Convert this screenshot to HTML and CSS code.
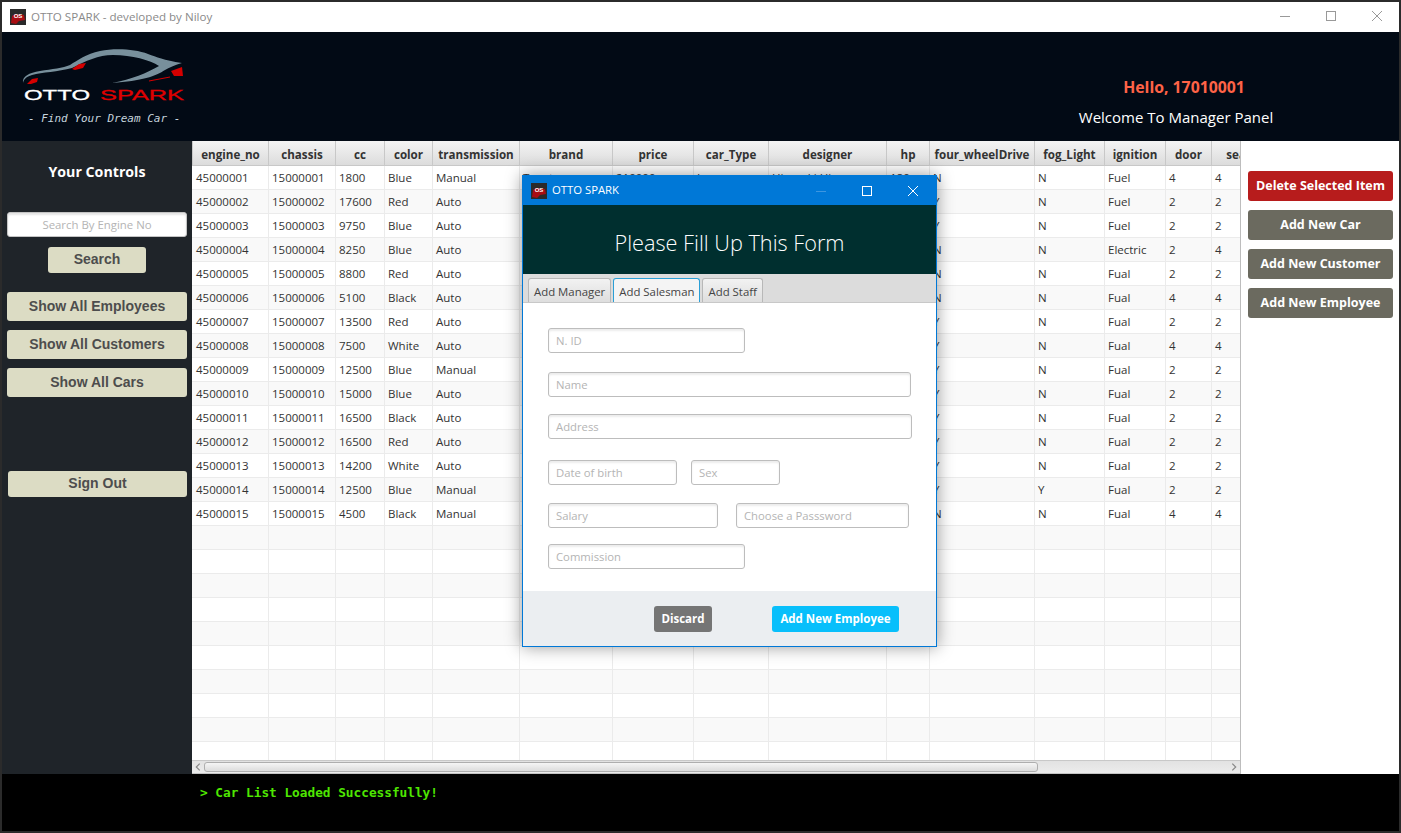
FILE: index.html
```html
<!DOCTYPE html>
<html lang="en">
<head>
    <meta charset="UTF-8">
    <title>OTTO SPARK - developed by Niloy</title>
    <link rel="stylesheet" href="styles.css">
</head>
<body>
<div class="window">
    <div class="titlebar">
        <svg class="app-icon" viewBox="0 0 16 16"><rect width="16" height="16" fill="#2a2a2a"/><path d="M1 14 L2 7 L5 5 L14 6 L15 11 L9 12 L6 15 Z" fill="#a80d12"/><text x="8" y="9" class="app-icon-text">OS</text></svg>
        <span class="titlebar-text">OTTO SPARK - developed by Niloy</span>
        <div class="win-controls">
            <svg viewBox="0 0 46 30"><path d="M19 14.5 H29" stroke="#999" fill="none"/></svg>
            <svg viewBox="0 0 46 30"><rect x="19.5" y="9.5" width="9" height="9" stroke="#999" fill="none"/></svg>
            <svg viewBox="0 0 46 30"><path d="M19 9 L29 19 M29 9 L19 19" stroke="#999" fill="none"/></svg>
        </div>
    </div>

    <header class="top">
        <div class="logo">
            <svg class="logo-car" viewBox="0 0 185 64">
                <path d="M13 43 C12 36 19 33 30 31 C42 29 53 28 60 25 C68 20 76 14 90 11 C105 8 125 9 138 14 C147 17 153 20 172 23 C165 25 160 27 155 30 C146 36 132 41 102 43 C122 39 137 33 149 26 C140 20 122 15 103 15 C88 15 76 21 62 28 C48 32 32 32 22 35 C16 37 14 39 13 43 Z" fill="#78909c"/>
                <path d="M62 29 L69 24 L76 23 L73 28 L65 30 Z" fill="#d40000"/>
                <path d="M17 44 L22 39 L28 38 L27 42 L21 44 Z" fill="#d40000"/>
                <path d="M161 31 L172 27 L173 36 L164 36 Z" fill="#d40000"/>
                <path d="M139 41 L160 37" stroke="#d40000" fill="none"/>
                <text x="14" y="60" class="logo-otto" textLength="66" lengthAdjust="spacingAndGlyphs">OTTO</text>
                <text x="90" y="60" class="logo-spark" textLength="84" lengthAdjust="spacingAndGlyphs">SPARK</text>
            </svg>
            <p class="tagline">- Find Your Dream Car -</p>
        </div>
        <div class="greeting">
            <p class="hello">Hello, 17010001</p>
            <p class="welcome">Welcome To Manager Panel</p>
        </div>
    </header>

    <div class="main">
        <aside class="sidebar">
            <h2 class="controls-title">Your Controls</h2>
            <input class="search-input" type="text" placeholder="Search By Engine No">
            <button class="side-btn search-btn">Search</button>
            <div class="side-group">
                <button class="side-btn">Show All Employees</button>
                <button class="side-btn">Show All Customers</button>
                <button class="side-btn">Show All Cars</button>
            </div>
            <button class="side-btn signout-btn">Sign Out</button>
        </aside>

        <section class="table-area">
            <div class="table-clip">
                <table class="cars">
                    <colgroup>
                        <col class="c77"><col class="c67"><col class="c49"><col class="c48"><col class="c87"><col class="c93"><col class="c81"><col class="c75"><col class="c118"><col class="c43"><col class="c105"><col class="c70"><col class="c61"><col class="c46"><col class="c60">
                    </colgroup>
                    <thead>
                        <tr><th>engine_no</th><th>chassis</th><th>cc</th><th>color</th><th>transmission</th><th>brand</th><th>price</th><th>car_Type</th><th>designer</th><th>hp</th><th>four_wheelDrive</th><th>fog_Light</th><th>ignition</th><th>door</th><th>seats</th></tr>
                    </thead>
                    <tbody>
                        <tr><td>45000001</td><td>15000001</td><td>1800</td><td>Blue</td><td>Manual</td><td>Toyota</td><td>210000</td><td>Luxury</td><td>Hiroyuki Hirano</td><td>180</td><td>N</td><td>N</td><td>Fuel</td><td>4</td><td>4</td></tr>
                        <tr><td>45000002</td><td>15000002</td><td>17600</td><td>Red</td><td>Auto</td><td></td><td></td><td></td><td></td><td></td><td>Y</td><td>N</td><td>Fuel</td><td>2</td><td>2</td></tr>
                        <tr><td>45000003</td><td>15000003</td><td>9750</td><td>Blue</td><td>Auto</td><td></td><td></td><td></td><td></td><td></td><td>Y</td><td>N</td><td>Fuel</td><td>2</td><td>2</td></tr>
                        <tr><td>45000004</td><td>15000004</td><td>8250</td><td>Blue</td><td>Auto</td><td></td><td></td><td></td><td></td><td></td><td>N</td><td>N</td><td>Electric</td><td>2</td><td>4</td></tr>
                        <tr><td>45000005</td><td>15000005</td><td>8800</td><td>Red</td><td>Auto</td><td></td><td></td><td></td><td></td><td></td><td>N</td><td>N</td><td>Fual</td><td>2</td><td>2</td></tr>
                        <tr><td>45000006</td><td>15000006</td><td>5100</td><td>Black</td><td>Auto</td><td></td><td></td><td></td><td></td><td></td><td>N</td><td>N</td><td>Fual</td><td>4</td><td>4</td></tr>
                        <tr><td>45000007</td><td>15000007</td><td>13500</td><td>Red</td><td>Auto</td><td></td><td></td><td></td><td></td><td></td><td>Y</td><td>N</td><td>Fual</td><td>2</td><td>2</td></tr>
                        <tr><td>45000008</td><td>15000008</td><td>7500</td><td>White</td><td>Auto</td><td></td><td></td><td></td><td></td><td></td><td>Y</td><td>N</td><td>Fual</td><td>4</td><td>4</td></tr>
                        <tr><td>45000009</td><td>15000009</td><td>12500</td><td>Blue</td><td>Manual</td><td></td><td></td><td></td><td></td><td></td><td>Y</td><td>N</td><td>Fual</td><td>2</td><td>2</td></tr>
                        <tr><td>45000010</td><td>15000010</td><td>15000</td><td>Blue</td><td>Auto</td><td></td><td></td><td></td><td></td><td></td><td>Y</td><td>N</td><td>Fual</td><td>2</td><td>2</td></tr>
                        <tr><td>45000011</td><td>15000011</td><td>16500</td><td>Black</td><td>Auto</td><td></td><td></td><td></td><td></td><td></td><td>Y</td><td>N</td><td>Fual</td><td>2</td><td>2</td></tr>
                        <tr><td>45000012</td><td>15000012</td><td>16500</td><td>Red</td><td>Auto</td><td></td><td></td><td></td><td></td><td></td><td>Y</td><td>N</td><td>Fual</td><td>2</td><td>2</td></tr>
                        <tr><td>45000013</td><td>15000013</td><td>14200</td><td>White</td><td>Auto</td><td></td><td></td><td></td><td></td><td></td><td>Y</td><td>N</td><td>Fual</td><td>2</td><td>2</td></tr>
                        <tr><td>45000014</td><td>15000014</td><td>12500</td><td>Blue</td><td>Manual</td><td></td><td></td><td></td><td></td><td></td><td>Y</td><td>Y</td><td>Fual</td><td>2</td><td>2</td></tr>
                        <tr><td>45000015</td><td>15000015</td><td>4500</td><td>Black</td><td>Manual</td><td></td><td></td><td></td><td></td><td></td><td>N</td><td>N</td><td>Fual</td><td>4</td><td>4</td></tr>
                        <tr><td></td><td></td><td></td><td></td><td></td><td></td><td></td><td></td><td></td><td></td><td></td><td></td><td></td><td></td><td></td></tr>
                        <tr><td></td><td></td><td></td><td></td><td></td><td></td><td></td><td></td><td></td><td></td><td></td><td></td><td></td><td></td><td></td></tr>
                        <tr><td></td><td></td><td></td><td></td><td></td><td></td><td></td><td></td><td></td><td></td><td></td><td></td><td></td><td></td><td></td></tr>
                        <tr><td></td><td></td><td></td><td></td><td></td><td></td><td></td><td></td><td></td><td></td><td></td><td></td><td></td><td></td><td></td></tr>
                        <tr><td></td><td></td><td></td><td></td><td></td><td></td><td></td><td></td><td></td><td></td><td></td><td></td><td></td><td></td><td></td></tr>
                        <tr><td></td><td></td><td></td><td></td><td></td><td></td><td></td><td></td><td></td><td></td><td></td><td></td><td></td><td></td><td></td></tr>
                        <tr><td></td><td></td><td></td><td></td><td></td><td></td><td></td><td></td><td></td><td></td><td></td><td></td><td></td><td></td><td></td></tr>
                        <tr><td></td><td></td><td></td><td></td><td></td><td></td><td></td><td></td><td></td><td></td><td></td><td></td><td></td><td></td><td></td></tr>
                        <tr><td></td><td></td><td></td><td></td><td></td><td></td><td></td><td></td><td></td><td></td><td></td><td></td><td></td><td></td><td></td></tr>
                        <tr><td></td><td></td><td></td><td></td><td></td><td></td><td></td><td></td><td></td><td></td><td></td><td></td><td></td><td></td><td></td></tr>
                    </tbody>
                </table>
            </div>
            <div class="hscroll">
                <svg class="hscroll-arrow" viewBox="0 0 12 14"><path d="M8 3 L4 7 L8 11" stroke="#888" stroke-width="1.4" fill="none"/></svg>
                <div class="hscroll-track"><div class="hscroll-thumb"></div></div>
                <svg class="hscroll-arrow" viewBox="0 0 12 14"><path d="M4 3 L8 7 L4 11" stroke="#888" stroke-width="1.4" fill="none"/></svg>
            </div>
        </section>

        <aside class="actions">
            <button class="action-btn action-delete">Delete Selected Item</button>
            <button class="action-btn">Add New Car</button>
            <button class="action-btn">Add New Customer</button>
            <button class="action-btn">Add New Employee</button>
        </aside>
    </div>

    <footer class="console">&gt; Car List Loaded Successfully!</footer>
</div>

<!-- Add employee dialog -->
<div class="dialog">
    <div class="dialog-title">
        <svg class="app-icon" viewBox="0 0 16 16"><rect width="16" height="16" fill="#2a2a2a"/><path d="M1 14 L2 7 L5 5 L14 6 L15 11 L9 12 L6 15 Z" fill="#a80d12"/><text x="8" y="9" class="app-icon-text">OS</text></svg>
        <span class="dialog-title-text">OTTO SPARK</span>
        <div class="dialog-controls">
            <svg viewBox="0 0 46 30"><path d="M18 15.5 H28" stroke="#3d96e0" fill="none"/></svg>
            <svg viewBox="0 0 46 30"><rect x="18.5" y="10.5" width="9" height="9" stroke="#fff" fill="none"/></svg>
            <svg viewBox="0 0 46 30"><path d="M18 10 L28 20 M28 10 L18 20" stroke="#fff" fill="none"/></svg>
        </div>
    </div>
    <div class="dialog-head">Please Fill Up This Form</div>
    <div class="tabs">
        <span class="tab">Add Manager</span>
        <span class="tab tab-active">Add Salesman</span>
        <span class="tab">Add Staff</span>
    </div>
    <div class="form">
        <div class="form-row row-nid"><input class="field w197" type="text" placeholder="N. ID"></div>
        <div class="form-row row-name"><input class="field w363" type="text" placeholder="Name"></div>
        <div class="form-row row-address"><input class="field w364" type="text" placeholder="Address"></div>
        <div class="form-row row-dob">
            <input class="field w129" type="text" placeholder="Date of birth">
            <input class="field w89" type="text" placeholder="Sex">
        </div>
        <div class="form-row row-salary">
            <input class="field w170" type="text" placeholder="Salary">
            <input class="field w173" type="text" placeholder="Choose a Passsword">
        </div>
        <div class="form-row row-comm"><input class="field w197" type="text" placeholder="Commission"></div>
    </div>
    <div class="dialog-foot">
        <button class="foot-btn foot-discard">Discard</button>
        <button class="foot-btn foot-add">Add New Employee</button>
    </div>
</div>
</body>
</html>
```

FILE: styles.css
```css
* {
    box-sizing: border-box;
}

body {
    margin: 0;
    width: 1401px;
    height: 833px;
    overflow: hidden;
    font-family: "Open Sans", "Noto Sans", sans-serif;
    background: #fff;
}

p, h2 {
    margin: 0;
}

button {
    border: none;
    cursor: pointer;
    white-space: nowrap;
}

.window {
    width: 1401px;
    height: 833px;
    border: 2px solid #2b2b2b;
    display: flex;
    flex-direction: column;
}

/* title bar */
.titlebar {
    height: 30px;
    flex: none;
    background: #fff;
    display: flex;
    align-items: center;
    padding-left: 8px;
}

.app-icon {
    width: 16px;
    height: 16px;
    flex: none;
}

.app-icon-text {
    font-family: "Liberation Sans", sans-serif;
    font-size: 6px;
    font-weight: bold;
    fill: #fff;
    text-anchor: middle;
}

.titlebar-text {
    margin-left: 5px;
    margin-bottom: 2px;
    font-size: 11.6px;
    color: #8a8a8a;
}

.win-controls {
    margin-left: auto;
    display: flex;
}

.win-controls svg {
    width: 46px;
    height: 30px;
}

/* header */
.top {
    height: 109px;
    flex: none;
    background: #020a15;
    display: flex;
    justify-content: space-between;
}

.logo {
    width: 185px;
    margin-left: 8px;
    padding-top: 8px;
}

.logo-car {
    display: block;
    width: 185px;
    height: 64px;
}

.logo-otto, .logo-spark {
    font-family: "Liberation Sans", sans-serif;
    font-size: 15.5px;
    stroke-width: 0.3;
}

.logo-otto {
    fill: #fff;
    stroke: #fff;
}

.logo-spark {
    fill: #e00000;
    stroke: #e00000;
}

.tagline {
    margin-top: 8px;
    margin-left: 18px;
    font-family: "DejaVu Sans Mono", monospace;
    font-style: italic;
    font-size: 11px;
    color: #c6d4de;
}

.greeting {
    width: 300px;
    padding-top: 44px;
    margin-right: 73px;
    text-align: center;
}

.hello {
    margin-left: 16px;
    font-size: 15.8px;
    font-weight: 700;
    line-height: 22px;
    color: #ff6347;
}

.welcome {
    margin-top: 8px;
    font-size: 15px;
    line-height: 22px;
    color: #fff;
}

/* main area */
.main {
    height: 633px;
    flex: none;
    display: flex;
}

.sidebar {
    width: 190px;
    flex: none;
    background: #1f2429;
    display: flex;
    flex-direction: column;
    align-items: center;
    padding-left: 5px;
    padding-right: 5px;
}

.controls-title {
    margin-top: 20px;
    height: 22px;
    line-height: 22px;
    font-size: 14.2px;
    font-weight: 700;
    color: #fff;
}

.search-input {
    width: 180px;
    height: 25px;
    margin-top: 29px;
    border: 1px solid #c4c4c4;
    border-radius: 3px;
    background: #fff;
    box-shadow: inset 0 2px 2px #e4e4e4;
    font-family: inherit;
    font-size: 11.4px;
    text-align: center;
    outline: none;
}

.search-input::placeholder {
    color: #b4b4b4;
    opacity: 1;
}

.side-btn {
    width: 180px;
    height: 29px;
    padding: 0 0 2px;
    border-radius: 3px;
    background: #dcdcc4;
    color: #4d4d4d;
    font-family: "Liberation Sans", sans-serif;
    font-size: 14px;
    font-weight: bold;
}

.search-btn {
    width: 98px;
    height: 26px;
    margin-top: 10px;
}

.side-group {
    margin-top: 19px;
    display: flex;
    flex-direction: column;
    gap: 9px;
}

.signout-btn {
    width: 179px;
    height: 26px;
    margin-top: 74px;
    margin-left: 1px;
}

/* car table */
.table-area {
    width: 1049px;
    flex: none;
    display: flex;
    flex-direction: column;
    border-right: 1px solid #bdbdbd;
}

.table-clip {
    height: 619px;
    overflow: hidden;
}

.cars {
    width: 1080px;
    table-layout: fixed;
    border-collapse: separate;
    border-spacing: 0;
    font-size: 11.5px;
    color: #333;
}

.c77 { width: 77px; }
.c67 { width: 67px; }
.c49 { width: 49px; }
.c48 { width: 48px; }
.c87 { width: 87px; }
.c93 { width: 93px; }
.c81 { width: 81px; }
.c75 { width: 75px; }
.c118 { width: 118px; }
.c43 { width: 43px; }
.c105 { width: 105px; }
.c70 { width: 70px; }
.c61 { width: 61px; }
.c46 { width: 46px; }
.c60 { width: 60px; }

.cars th {
    height: 25px;
    padding: 3px 0 0;
    font-weight: 700;
    font-size: 11.6px;
    color: #333;
    background: linear-gradient(to bottom, #f4f4f4, #dcdcdc);
    border-right: 1px solid #c8c8c8;
    border-bottom: 1px solid #c8c8c8;
    white-space: nowrap;
    overflow: hidden;
}

.cars th:first-child {
    border-left: 1px solid #c8c8c8;
}

.cars td {
    height: 24px;
    padding: 0 0 1px 3px;
    background: #fff;
    border-right: 1px solid #ebebeb;
    border-bottom: 1px solid #ebebeb;
    white-space: nowrap;
    overflow: hidden;
}

.cars td:first-child {
    padding-left: 4px;
}

.cars tbody tr:nth-child(even) td {
    background: #f9f9f9;
}

/* horizontal scroll bar */
.hscroll {
    height: 14px;
    flex: none;
    display: flex;
    align-items: center;
    background: linear-gradient(to bottom, #e2e2e2, #ececec);
    border-top: 1px solid #c8c8c8;
    border-bottom: 1px solid #c4c4c4;
}

.hscroll-arrow {
    width: 12px;
    height: 12px;
    flex: none;
}

.hscroll-track {
    flex: 1;
    height: 10px;
}

.hscroll-thumb {
    width: 834px;
    height: 10px;
    border: 1px solid #aeaeae;
    border-radius: 3px;
    background: linear-gradient(to bottom, #f5f5f5, #dcdcdc);
}

/* right actions */
.actions {
    flex: 1;
    background: #fff;
    display: flex;
    flex-direction: column;
    gap: 9px;
    padding: 30px 0 0 7px;
}

.action-btn {
    width: 145px;
    height: 30px;
    padding: 0 0 2px;
    border-radius: 3px;
    background: #6b6a5f;
    color: #fff;
    font-family: inherit;
    font-size: 12.5px;
    font-weight: 700;
}

.action-delete {
    background: #b71c1c;
}

/* bottom console */
.console {
    flex: 1;
    background: #000;
    color: #4ee600;
    font-family: "DejaVu Sans Mono", monospace;
    font-size: 12.75px;
    font-weight: bold;
    padding: 11px 0 0 198px;
}

/* dialog over the window */
.dialog {
    position: absolute;
    left: 522px;
    top: 175px;
    width: 415px;
    height: 472px;
    border: 1px solid #0078d7;
    background: #fff;
    box-shadow: 0 0 16px rgba(0, 0, 0, 0.4);
    display: flex;
    flex-direction: column;
}

.dialog-title {
    height: 29px;
    flex: none;
    background: #0078d7;
    display: flex;
    align-items: center;
    padding-left: 8px;
}

.dialog-title-text {
    margin-left: 5px;
    margin-bottom: 2px;
    font-size: 11.3px;
    color: #fff;
}

.dialog-controls {
    margin-left: auto;
    display: flex;
}

.dialog-controls svg {
    width: 46px;
    height: 30px;
}

.dialog-head {
    height: 69px;
    flex: none;
    padding-top: 6px;
    background: #002f2f;
    color: #fff;
    font-size: 21.7px;
    font-weight: 300;
    display: flex;
    align-items: center;
    justify-content: center;
}

.tabs {
    height: 29px;
    flex: none;
    background: #dcdcdc;
    display: flex;
    align-items: flex-end;
    padding-left: 5px;
    gap: 2px;
    border-bottom: 1px solid #c8c8c8;
}

.tab {
    height: 24px;
    padding: 0 5px;
    line-height: 25px;
    font-size: 11.4px;
    color: #444;
    border: 1px solid #b8b8b8;
    border-bottom: none;
    border-radius: 3px 3px 0 0;
    background: linear-gradient(to bottom, #f2f2f2, #dedede);
}

.tab-active {
    background: #f4f4f4;
    border-color: #2a9fd6;
}

.form {
    flex: 1;
    position: relative;
    padding-left: 25px;
}

.form-row {
    display: flex;
}

.row-nid { margin-top: 25px; }
.row-name { margin-top: 19px; }
.row-address { margin-top: 17px; }
.row-dob { margin-top: 21px; gap: 14px; }
.row-salary { margin-top: 18px; gap: 18px; }
.row-comm { margin-top: 16px; }

.field {
    height: 25px;
    padding: 0 7px;
    border: 1px solid #bdbdbd;
    border-radius: 3px;
    background: #fff;
    box-shadow: inset 0 2px 2px #ececec;
    font-family: inherit;
    font-size: 11.3px;
    outline: none;
}

.field::placeholder {
    color: #b4b4b4;
    opacity: 1;
}

.w89 { width: 89px; }
.w129 { width: 129px; }
.w170 { width: 170px; }
.w173 { width: 173px; }
.w197 { width: 197px; }
.w363 { width: 363px; }
.w364 { width: 364px; }

.dialog-foot {
    height: 55px;
    flex: none;
    background: #ebeef1;
    display: flex;
    align-items: center;
    padding: 0 0 0 131px;
}

.foot-btn {
    height: 26px;
    padding: 0;
    border-radius: 3px;
    color: #fff;
    font-family: inherit;
    font-size: 11.5px;
    font-weight: 700;
}

.foot-discard {
    width: 58px;
    background: #757575;
}

.foot-add {
    width: 127px;
    margin-left: 60px;
    background: #08bffb;
}
```
